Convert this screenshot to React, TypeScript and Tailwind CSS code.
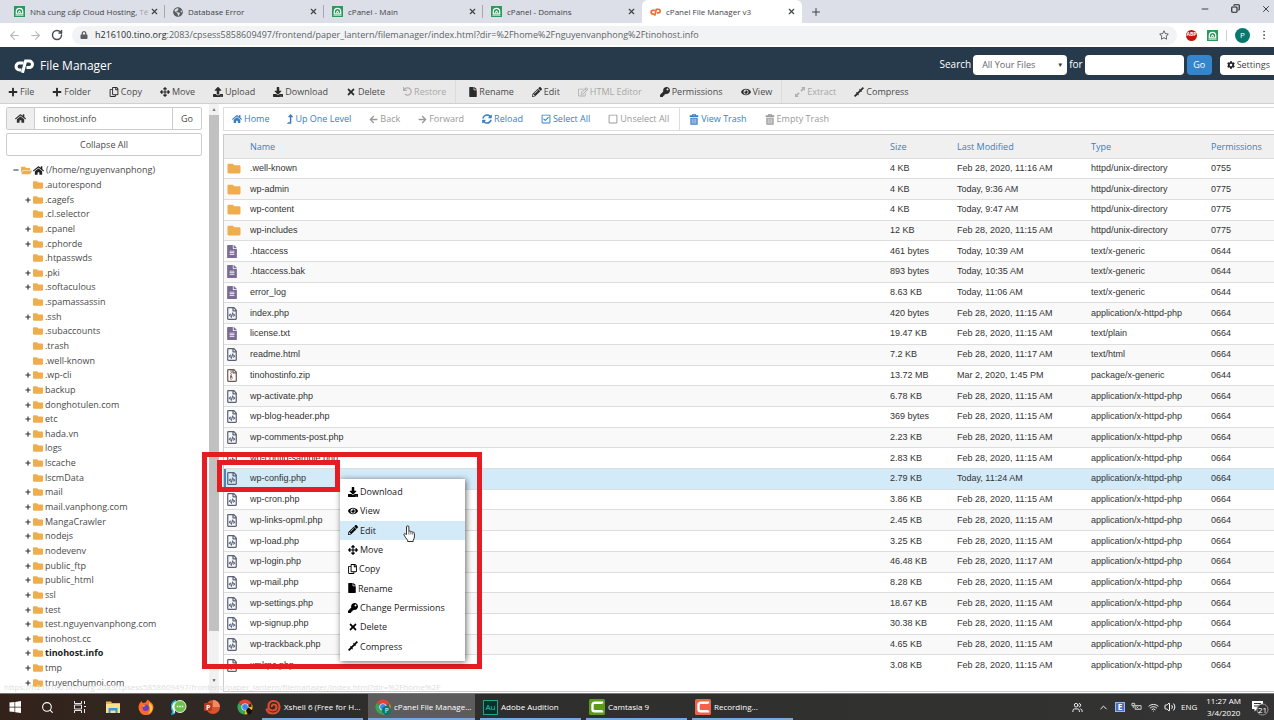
import type { ReactNode } from "react";
import {
  FaArrowLeft,
  FaArrowRight,
  FaArrowsAlt,
  FaCog,
  FaDownload,
  FaEye,
  FaFile,
  FaFileAlt,
  FaFolder,
  FaFolderOpen,
  FaGlobeAmericas,
  FaHome,
  FaKey,
  FaLevelUpAlt,
  FaLock,
  FaMinus,
  FaPencilAlt,
  FaPlus,
  FaRegCheckSquare,
  FaRegCopy,
  FaRegEdit,
  FaRegFileArchive,
  FaRegFileCode,
  FaRegSquare,
  FaRegStar,
  FaSyncAlt,
  FaTimes,
  FaUndo,
  FaUpload,
} from "react-icons/fa";
import { ArrowLeft, ArrowRight, ChevronUp, Copy, Minus, MoreVertical, Plus, RotateCw, Search, Users, Volume2, Wifi, X } from "lucide-react";

type Kind = "folder" | "text" | "code" | "zip";

type FileRow = {
  name: string;
  kind: Kind;
  size: string;
  modified: string;
  type: string;
  perms: string;
};

const DIR = "httpd/unix-directory";
const PHP = "application/x-httpd-php";

const files: FileRow[] = [
  { name: ".well-known", kind: "folder", size: "4 KB", modified: "Feb 28, 2020, 11:16 AM", type: DIR, perms: "0755" },
  { name: "wp-admin", kind: "folder", size: "4 KB", modified: "Today, 9:36 AM", type: DIR, perms: "0775" },
  { name: "wp-content", kind: "folder", size: "4 KB", modified: "Today, 9:47 AM", type: DIR, perms: "0775" },
  { name: "wp-includes", kind: "folder", size: "12 KB", modified: "Feb 28, 2020, 11:15 AM", type: DIR, perms: "0775" },
  { name: ".htaccess", kind: "text", size: "461 bytes", modified: "Today, 10:39 AM", type: "text/x-generic", perms: "0644" },
  { name: ".htaccess.bak", kind: "text", size: "893 bytes", modified: "Today, 10:35 AM", type: "text/x-generic", perms: "0644" },
  { name: "error_log", kind: "text", size: "8.63 KB", modified: "Today, 11:06 AM", type: "text/x-generic", perms: "0644" },
  { name: "index.php", kind: "code", size: "420 bytes", modified: "Feb 28, 2020, 11:15 AM", type: PHP, perms: "0664" },
  { name: "license.txt", kind: "text", size: "19.47 KB", modified: "Feb 28, 2020, 11:15 AM", type: "text/plain", perms: "0664" },
  { name: "readme.html", kind: "code", size: "7.2 KB", modified: "Feb 28, 2020, 11:17 AM", type: "text/html", perms: "0664" },
  { name: "tinohostinfo.zip", kind: "zip", size: "13.72 MB", modified: "Mar 2, 2020, 1:45 PM", type: "package/x-generic", perms: "0644" },
  { name: "wp-activate.php", kind: "code", size: "6.78 KB", modified: "Feb 28, 2020, 11:15 AM", type: PHP, perms: "0664" },
  { name: "wp-blog-header.php", kind: "code", size: "369 bytes", modified: "Feb 28, 2020, 11:15 AM", type: PHP, perms: "0664" },
  { name: "wp-comments-post.php", kind: "code", size: "2.23 KB", modified: "Feb 28, 2020, 11:15 AM", type: PHP, perms: "0664" },
  { name: "wp-config-sample.php", kind: "code", size: "2.83 KB", modified: "Feb 28, 2020, 11:15 AM", type: PHP, perms: "0664" },
  { name: "wp-config.php", kind: "code", size: "2.79 KB", modified: "Today, 11:24 AM", type: PHP, perms: "0664" },
  { name: "wp-cron.php", kind: "code", size: "3.86 KB", modified: "Feb 28, 2020, 11:15 AM", type: PHP, perms: "0664" },
  { name: "wp-links-opml.php", kind: "code", size: "2.45 KB", modified: "Feb 28, 2020, 11:15 AM", type: PHP, perms: "0664" },
  { name: "wp-load.php", kind: "code", size: "3.25 KB", modified: "Feb 28, 2020, 11:15 AM", type: PHP, perms: "0664" },
  { name: "wp-login.php", kind: "code", size: "46.48 KB", modified: "Feb 28, 2020, 11:17 AM", type: PHP, perms: "0664" },
  { name: "wp-mail.php", kind: "code", size: "8.28 KB", modified: "Feb 28, 2020, 11:15 AM", type: PHP, perms: "0664" },
  { name: "wp-settings.php", kind: "code", size: "18.67 KB", modified: "Feb 28, 2020, 11:15 AM", type: PHP, perms: "0664" },
  { name: "wp-signup.php", kind: "code", size: "30.38 KB", modified: "Feb 28, 2020, 11:15 AM", type: PHP, perms: "0664" },
  { name: "wp-trackback.php", kind: "code", size: "4.65 KB", modified: "Feb 28, 2020, 11:15 AM", type: PHP, perms: "0664" },
  { name: "xmlrpc.php", kind: "code", size: "3.08 KB", modified: "Feb 28, 2020, 11:15 AM", type: PHP, perms: "0664" },
];

// [name, has children]
const tree: [string, boolean][] = [
  [".autorespond", false],
  [".cagefs", true],
  [".cl.selector", false],
  [".cpanel", true],
  [".cphorde", true],
  [".htpasswds", false],
  [".pki", true],
  [".softaculous", true],
  [".spamassassin", false],
  [".ssh", true],
  [".subaccounts", false],
  [".trash", false],
  [".well-known", false],
  [".wp-cli", true],
  ["backup", true],
  ["donghotulen.com", true],
  ["etc", true],
  ["hada.vn", true],
  ["logs", false],
  ["lscache", true],
  ["lscmData", false],
  ["mail", true],
  ["mail.vanphong.com", true],
  ["MangaCrawler", true],
  ["nodejs", true],
  ["nodevenv", true],
  ["public_ftp", true],
  ["public_html", true],
  ["ssl", true],
  ["test", true],
  ["test.nguyenvanphong.com", true],
  ["tinohost.cc", true],
  ["tinohost.info", true],
  ["tmp", true],
  ["truyenchumoi.com", true],
];

function CpanelLogo({ className }: { className: string }) {
  return (
    <svg viewBox="0 0 20 14" className={className} fill="none" stroke="currentColor" strokeWidth="3">
      <path d="M9.600 4H5.500a3.400 3.400 0 0 0 0 6.900H7.500" />
      <path d="M8.500 13.800 11.600 2h3.600a3.200 3.200 0 0 1 0 6.600h-2.700" />
    </svg>
  );
}

function CompressIcon() {
  return (
    <svg viewBox="0 0 16 16" className="size-[10px]" fill="currentColor">
      <path d="M8.500 2.500v5H13l-1-1.500L16 2 14 0l-4 3.800z" />
      <path d="M7.500 13.500v-5H3l1 1.500L0 14l2 2 4-3.800z" />
      <path d="m5.500 8.500 3-3 2 2-3 3z" />
    </svg>
  );
}

function ExtractIcon() {
  return (
    <svg viewBox="0 0 16 16" className="size-[10px]" fill="currentColor">
      <path d="M16 0v6l-2-2-3.500 3.500-2-2L12 2l-2-2zM0 16v-6l2 2 3.500-3.500 2 2L4 14l2 2z" />
    </svg>
  );
}

function TrashIcon() {
  return (
    <svg viewBox="0 0 16 18" className="h-[11px] w-[10px]" fill="currentColor">
      <path
        d="M5 0h6v2h4v3H1V2h4zM6.500 1.200V2h3v-.8zM2 6h12v11.500H2zM4.300 7.500V16h1.200V7.500zm3.100 0V16h1.200V7.500zm3.100 0V16h1.200V7.500z"
        fillRule="evenodd"
      />
    </svg>
  );
}

function TinoIcon() {
  return (
    <svg viewBox="0 0 12 12" className="size-[11px] shrink-0">
      <rect width="12" height="12" fill="#2a9a5b" />
      <path d="M2.500 8.500V6a3.500 3.500 0 0 1 7 0v2.500z" fill="none" stroke="#fff" strokeWidth="1.300" />
      <path d="M4.500 7.200 6 5.600l1.500 1.600" fill="none" stroke="#fff" strokeWidth="1.200" />
      <path d="M1.500 10.200h9" stroke="#bfe6cf" strokeWidth="1" />
    </svg>
  );
}

function KindIcon({ kind }: { kind: Kind }) {
  if (kind === "folder") return <FaFolder className="h-[13px] w-[14px] text-[#f0ad4e]" />;
  if (kind === "text") return <FaFileAlt className="h-[13px] w-[10px] text-[#7b6a95]" />;
  if (kind === "zip") return <FaRegFileArchive className="h-[13px] w-[10px] text-[#6e5a50]" />;
  return <FaRegFileCode className="h-[13px] w-[10px] text-[#5a6078]" />;
}

function Tab({ icon, title, active, last }: { icon: ReactNode; title: ReactNode; active?: boolean; last?: boolean }) {
  return (
    <div
      className={
        active
          ? "flex w-[160px] items-center rounded-t-md bg-white pr-[6px] pl-[8px]"
          : "flex w-[159px] items-center pr-[6px] pl-[8px]"
      }
    >
      {icon}
      <span className="ml-[5px] flex-1 text-[8px] whitespace-nowrap text-[#3f4348]">{title}</span>
      <button type="button" aria-label="Close tab" className="text-[#3c4043]">
        <X size={9} strokeWidth={3} />
      </button>
      {!active && !last && <span className="-mr-[6px] ml-[5px] h-[13px] w-px bg-[#a5a9b0]" />}
    </div>
  );
}

function BrowserChrome() {
  return (
    <header className="shrink-0">
      <div className="flex h-[23px] items-stretch bg-[#dcdfe7] pl-[6px]">
        <Tab
          icon={<TinoIcon />}
          title={
            <>
              Nhà cung cấp Cloud Hosting, <span className="text-[#a0a4ab]">Tê</span>
            </>
          }
        />
        <Tab icon={<FaGlobeAmericas className="size-[10px] shrink-0 text-[#5a5e63]" />} title="Database Error" />
        <Tab icon={<TinoIcon />} title="cPanel - Main" />
        <Tab icon={<TinoIcon />} title="cPanel - Domains" last />
        <Tab icon={<CpanelLogo className="h-[8px] w-[11px] shrink-0 text-[#ef6c35]" />} title="cPanel File Manager v3" active />
        <button type="button" aria-label="New tab" className="ml-[8px] text-[#3c4043]">
          <Plus size={12} strokeWidth={2} />
        </button>
        <div className="ml-auto flex items-start gap-[21px] pt-[4px] pr-[3px] text-[#222]">
          <Minus size={10} strokeWidth={2} />
          <Copy size={9} strokeWidth={3} className="-scale-x-100" />
          <X size={10} strokeWidth={2} />
        </div>
      </div>
      <div className="flex h-[24px] items-center bg-white pr-[4px] pl-[8px]">
        <ArrowLeft size={13} className="text-[#b5b8bb]" />
        <ArrowRight size={13} className="ml-[8px] text-[#b5b8bb]" />
        <RotateCw size={12} strokeWidth={3} className="ml-[9px] text-[#4a4d51]" />
        <div className="ml-[9px] flex h-[19px] flex-1 items-center rounded-full bg-[#f1f3f4] px-[8px]">
          <FaLock className="size-[8px] text-[#5a5e63]" />
          <span className="ml-[7px] flex-1 text-[9px] text-[#5f6368]">
            <span className="text-[#2a2c2f]">h216100.tino.org</span>
            :2083/cpsess5858609497/frontend/paper_lantern/filemanager/index.html?dir=%2Fhome%2Fnguyenvanphong%2Ftinohost.info
          </span>
          <FaRegStar className="size-[10px] text-[#5a5e63]" />
        </div>
        <span className="ml-[9px] flex size-[11px] items-center justify-center rounded-full bg-[#c2170c] text-[5px] font-bold text-white">
          ABP
        </span>
        <span className="ml-[10px]">
          <TinoIcon />
        </span>
        <span className="mx-[8px] h-[11px] w-px bg-[#d0d3d6]" />
        <span className="flex size-[15px] items-center justify-center rounded-full bg-[#07786f] text-[8px] text-white">P</span>
        <MoreVertical size={12} className="ml-[8px] text-[#5a5e63]" />
      </div>
    </header>
  );
}

function ManagerHeader() {
  return (
    <div className="flex h-[33px] shrink-0 items-center bg-[#273a4c] pl-[14px] text-white">
      <div className="flex items-center gap-[6px] pt-[5px]">
        <CpanelLogo className="h-[14px] w-[20px]" />
        <h1 className="text-[12px]">File Manager</h1>
      </div>
      <form className="ml-auto flex items-center pt-[2px] text-[10px]" onSubmit={(e) => e.preventDefault()}>
        <label htmlFor="scope">Search</label>
        <span className="relative ml-[2px]">
          <select id="scope" className="h-[20px] w-[94px] appearance-none rounded-sm bg-white px-[9px] text-[9px] text-[#666]">
            <option>All Your Files</option>
          </select>
          <span className="pointer-events-none absolute top-[6px] right-[4px] text-[6px] leading-[8px] text-[#333]">▼</span>
        </span>
        <label htmlFor="query" className="ml-[2px]">
          for
        </label>
        <input id="query" className="ml-[2px] h-[20px] w-[99px] rounded-sm bg-white px-[6px] text-[#333]" />
        <button type="submit" className="ml-[3px] h-[20px] w-[25px] rounded-sm bg-[#3585cc] text-[9px]">
          Go
        </button>
        <button type="button" className="ml-[8px] flex h-[20px] items-center gap-[2px] rounded-l-sm bg-white pr-[4px] pl-[7px] text-[9px] text-[#444]">
          <FaCog className="size-[8px] text-[#222]" />
          Settings
        </button>
      </form>
    </div>
  );
}

function Tool({ icon, label, disabled, end }: { icon: ReactNode; label: string; disabled?: boolean; end?: boolean }) {
  return (
    <button
      type="button"
      disabled={disabled}
      className={`flex items-center gap-[2px] border-r pr-[9px] pl-[8px] text-[9px] ${
        end ? "mr-[5px] border-[#dcdcdc]" : "border-transparent"
      } ${disabled ? "text-[#a8a8a8]" : "text-[#4a4a4a]"}`}
    >
      <span className={disabled ? "text-[#b0b0b0]" : "text-[#2b2b2b]"}>{icon}</span>
      {label}
    </button>
  );
}

function Toolbar() {
  const s = "size-[10px]";
  return (
    <div className="flex h-[24px] shrink-0 items-stretch border-b border-[#d0d0d0] bg-[#e9e9e9]">
      <Tool icon={<FaPlus className={s} />} label="File" />
      <Tool icon={<FaPlus className={s} />} label="Folder" />
      <Tool icon={<FaRegCopy className={s} />} label="Copy" />
      <Tool icon={<FaArrowsAlt className={s} />} label="Move" />
      <Tool icon={<FaUpload className={s} />} label="Upload" />
      <Tool icon={<FaDownload className={s} />} label="Download" />
      <Tool icon={<FaTimes className={s} />} label="Delete" />
      <Tool icon={<FaUndo className="size-[9px]" />} label="Restore" disabled end />
      <Tool icon={<FaFile className="h-[10px] w-[8px]" />} label="Rename" />
      <Tool icon={<FaPencilAlt className={s} />} label="Edit" />
      <Tool icon={<FaRegEdit className={s} />} label="HTML Editor" disabled />
      <Tool icon={<FaKey className={s} />} label="Permissions" />
      <Tool icon={<FaEye className={s} />} label="View" end />
      <Tool icon={<ExtractIcon />} label="Extract" disabled />
      <Tool icon={<CompressIcon />} label="Compress" />
    </div>
  );
}

function Sidebar() {
  return (
    <aside className="flex w-[209px] shrink-0 flex-col pt-[3px] pr-[7px] pb-[3px] pl-[6px] text-[9px] text-[#4a4a4a]">
      <form className="flex h-[23px] shrink-0 rounded-xs border border-[#ccc]" onSubmit={(e) => e.preventDefault()}>
        <button type="button" aria-label="Home" className="flex w-[28px] items-center justify-center border-r border-[#ccc] bg-[#eee]">
          <FaHome className="size-[11px] text-[#333]" />
        </button>
        <input aria-label="Path" defaultValue="tinohost.info" className="min-w-0 flex-1 px-[8px]" />
        <button type="submit" className="w-[29px] border-l border-[#ccc]">
          Go
        </button>
      </form>
      <button type="button" className="mt-[3px] h-[23px] shrink-0 rounded-xs border border-[#ccc]">
        Collapse All
      </button>
      <ul className="mt-[7px] flex min-h-0 flex-1 flex-col leading-[14px]">
        <li className="flex min-h-0 flex-1 items-center pl-[7px]">
          <FaMinus className="size-[6px] text-[#333]" />
          <FaFolderOpen className="ml-[2px] size-[11px] text-[#f0ad4e]" />
          <FaHome className="ml-[1px] size-[11px] text-[#222]" />
          <span className="ml-[2px]">(/home/nguyenvanphong)</span>
        </li>
        {tree.map(([name, children]) => (
          <li key={name} className="flex min-h-0 flex-1 items-center pl-[19px]">
            <span className="w-[8px]">{children && <FaPlus className="size-[6px] text-[#333]" />}</span>
            <FaFolder className="size-[10px] text-[#f0ad4e]" />
            <span className={name === "tinohost.info" ? "ml-[2px] font-bold text-[#222]" : "ml-[2px]"}>{name}</span>
          </li>
        ))}
      </ul>
    </aside>
  );
}

function ScrollTrack() {
  return (
    <div className="flex w-[10px] shrink-0 flex-col items-center bg-[#f1f1f1]">
      <span className="h-[11px] text-[5px] leading-[11px] text-[#777]">▲</span>
      <span className="w-full flex-1 bg-[#c1c1c1]" />
      <span className="mt-[44px] h-[18px] text-[5px] leading-[11px] text-[#555]">▼</span>
    </div>
  );
}

function NavLink({ icon, label, muted }: { icon: ReactNode; label: string; muted?: boolean }) {
  return (
    <button type="button" className={`flex items-center gap-[2px] pr-[9px] pl-[8px] ${muted ? "text-[#999]" : "text-[#3a7ec2]"}`}>
      {icon}
      {label}
    </button>
  );
}

function FilePane() {
  const s = "size-[10px]";
  return (
    <main className="ml-[4px] flex min-w-0 flex-1 flex-col pt-[3px]">
      <nav className="flex h-[24px] shrink-0 items-stretch gap-px border border-r-0 border-[#ddd] text-[9px]">
        <NavLink icon={<FaHome className={s} />} label="Home" />
        <NavLink icon={<FaLevelUpAlt className="h-[10px] w-[6px]" />} label="Up One Level" />
        <NavLink icon={<FaArrowLeft className="size-[9px]" />} label="Back" muted />
        <NavLink icon={<FaArrowRight className="size-[9px]" />} label="Forward" muted />
        <NavLink icon={<FaSyncAlt className={s} />} label="Reload" />
        <NavLink icon={<FaRegCheckSquare className={s} />} label="Select All" />
        <NavLink icon={<FaRegSquare className={s} />} label="Unselect All" muted />
        <span className="w-px bg-[#ddd]" />
        <NavLink icon={<TrashIcon />} label="View Trash" />
        <NavLink icon={<TrashIcon />} label="Empty Trash" muted />
      </nav>
      <div className="mt-[3px] mb-px min-h-0 flex-1 border border-r-0 border-[#ccc] pb-[16px]">
        <table className="h-full w-full table-fixed border-collapse text-left text-[9px] text-[#333]">
          <colgroup>
            <col className="w-[26px]" />
            <col />
            <col className="w-[67px]" />
            <col className="w-[134px]" />
            <col className="w-[120px]" />
            <col className="w-[63px]" />
          </colgroup>
          <thead>
            <tr className="h-[23px] bg-[#f0f0f0] text-[#3a7ec2]">
              <th aria-label="Kind" />
              <th className="font-normal">Name</th>
              <th className="font-normal">Size</th>
              <th className="font-normal">Last Modified</th>
              <th className="font-normal">Type</th>
              <th className="font-normal">Permissions</th>
            </tr>
          </thead>
          <tbody className="font-['Liberation_Sans',Arial,sans-serif]">
            {files.map((f, i) => (
              <tr
                key={f.name}
                className={`border-t border-[#ddd] leading-[13px] ${
                  f.name === "wp-config.php" ? "bg-[#d3eaf8] shadow-[inset_2px_0_0_#4585c4]" : i % 2 ? "bg-[#f9f9f9]" : "bg-white"
                }`}
              >
                <td className="pl-[3px]">
                  <KindIcon kind={f.kind} />
                </td>
                <td>{f.name}</td>
                <td>{f.size}</td>
                <td>{f.modified}</td>
                <td>{f.type}</td>
                <td>{f.perms}</td>
              </tr>
            ))}
          </tbody>
        </table>
      </div>
    </main>
  );
}

function ContextMenu() {
  const s = "size-[10px]";
  const items: [ReactNode, string][] = [
    [<FaDownload className={s} />, "Download"],
    [<FaEye className={s} />, "View"],
    [<FaPencilAlt className={s} />, "Edit"],
    [<FaArrowsAlt className={s} />, "Move"],
    [<FaRegCopy className="h-[10px] w-[9px]" />, "Copy"],
    [<FaFile className="h-[10px] w-[8px]" />, "Rename"],
    [<FaKey className={s} />, "Change Permissions"],
    [<FaTimes className={s} />, "Delete"],
    [<CompressIcon />, "Compress"],
  ];
  return (
    <div className="absolute top-[479px] left-[340px] flex h-[182px] w-[125px] flex-col bg-white pt-[3px] pb-[5px] text-[9px] text-[#222] shadow-[1px_1px_6px_rgba(0,0,0,0.6)]">
      {items.map(([icon, label]) => (
        <button
          key={label}
          type="button"
          className={`flex min-h-0 flex-1 items-center gap-[2px] pl-[8px] ${label === "Edit" ? "bg-[#d3eaf8]" : ""}`}
        >
          <span className="text-black">{icon}</span>
          {label}
        </button>
      ))}
    </div>
  );
}

function HandCursor() {
  return (
    <svg viewBox="0 0 12 17" className="absolute top-[525px] left-[403px] h-[17px] w-[12px]">
      <path
        d="M3.500 9.500V2a1.200 1.200 0 0 1 2.400 0v4.500c.6-.8 1.700-.6 2 .3.600-.6 1.600-.3 1.800.5.800-.4 1.700.1 1.700 1V12c0 1.500-.8 2.300-1.200 3.200v1.300H4.600v-1.300C3.500 13.800 2 12 .9 9.800.5 8.800 1.700 8.200 2.400 9z"
        fill="#fff"
        stroke="#333"
        strokeWidth="1"
      />
      <path d="M5.900 6.500v3M7.900 7v2.500M9.700 7.500v2" stroke="#333" strokeWidth=".7" />
    </svg>
  );
}

function ChromeLogo({ badge }: { badge: ReactNode }) {
  return (
    <svg viewBox="0 0 16 16" className="size-[16px] shrink-0">
      <path d="M8 8 1.500 4.200A7.500 7.500 0 0 1 14.500 4.200z" fill="#e24335" />
      <path d="M8 8 1.500 4.200A7.500 7.500 0 0 0 8 15.500z" fill="#34a853" />
      <path d="M8 8h6.500V4.200A7.500 7.500 0 0 1 8 15.500z" fill="#fbbc05" />
      <circle cx="8" cy="8" r="3.600" fill="#fff" />
      <circle cx="8" cy="8" r="2.900" fill="#4285f4" />
      {badge}
    </svg>
  );
}

function CamtasiaLogo({ color }: { color: string }) {
  return (
    <svg viewBox="0 0 16 16" className="size-[16px] shrink-0">
      <rect width="16" height="16" rx="1.500" fill={color} />
      <path d="M13 4.500V3.800H5.500a2 2 0 0 0-2 2v4.500a2 2 0 0 0 2 2H13v-.8" fill="none" stroke="#fff" strokeWidth="2.400" />
    </svg>
  );
}

function TaskButton({ icon, label, active }: { icon: ReactNode; label: string; active?: boolean }) {
  return (
    <button
      type="button"
      className={`flex items-center gap-[3px] border-b-2 border-[#76a9dc] pt-[2px] text-[8px] whitespace-nowrap text-white ${
        active ? "w-[107px] bg-[#5c5c5c] pl-[7px]" : "w-[101px] pl-[3px]"
      }`}
    >
      {icon}
      {label}
    </button>
  );
}

function Taskbar() {
  return (
    <footer className="flex h-[27px] shrink-0 items-stretch border-t border-[#777] bg-linear-to-r from-[#33221a] via-[#2d2d2b] via-25% to-[#333] pr-[5px] text-white">
      <div className="flex items-center gap-[17px] pl-[7px]">
        <svg viewBox="0 0 16 16" className="size-[16px]" fill="#fff">
          <path d="M2.500 3.600 7.500 3v4.700h-5zM8.200 2.900l5.800-.8v5.600H8.200zM2.500 8.400h5v4.700l-5-.7zM8.200 8.400H14V14l-5.800-.8z" />
        </svg>
        <Search size={13} strokeWidth={2} className="mx-px" />
        <svg viewBox="0 0 16 16" className="size-[16px]" fill="none" stroke="#e8e8e8">
          <path d="M2.500 2v2.500h7V2M2.500 14v-2.500h7V14M2.500 6h7v4h-7zM12.500 2v3m0 5v4M12 7.500h2" />
        </svg>
        <svg viewBox="0 0 16 16" className="size-[16px]">
          <path d="M1 2.500h5l1 1.500h8v10H1z" fill="#e8b84e" />
          <path d="M1 5h14v9H1z" fill="#fde08d" />
          <path d="M3.500 9h9v5h-2v-2.500h-5V14h-2z" fill="#3a9bd6" />
        </svg>
        <svg viewBox="0 0 16 16" className="size-[16px]">
          <path d="M13.500 3.800C12 2.500 11 2 10 .5 8.500 1.500 8 3 8 3.600c-1.500 0-2 .2-2.700.6C4.300 3.800 3.600 2.800 3.600 2 1.500 4 .5 6 .5 8.600a7.300 7.300 0 0 0 15 0c0-2-.8-3.700-2-4.800z" fill="#fb6a2c" />
          <path d="M11 3c2 2 3.500 3.500 3.500 6A6.500 6.500 0 0 1 10 15c3-3 2-7 1-8z" fill="#ffcb3a" />
          <circle cx="7.800" cy="8.800" r="3.200" fill="#6b3fc4" />
          <path d="M4 6.500c1.500-1 3-.5 4 .5-1.500 0-2 .8-3 .8z" fill="#ff9a2e" />
        </svg>
        <svg viewBox="0 0 16 16" className="size-[16px]">
          <path d="M5 1.500A6.500 6.500 0 0 0 2 12l-1 3 3-.8" fill="#fff" stroke="#27a7c9" strokeWidth="1.500" />
          <circle cx="9" cy="7.500" r="6" fill="#6cc04a" stroke="#e9f7e2" />
          <path d="M5.800 7.500h6.500" stroke="#fff" strokeDasharray="1.500 1" strokeWidth="1.500" />
        </svg>
        <svg viewBox="0 0 16 16" className="size-[16px]">
          <circle cx="9" cy="8" r="7" fill="#d8532f" />
          <path d="M9 1a7 7 0 0 1 7 7H9z" fill="#f08a68" />
          <rect x="0" y="4" width="8" height="8" rx="1" fill="#b7391b" />
          <text x="2" y="10.500" fontSize="7" fontWeight="bold" fill="#fff">P</text>
        </svg>
        <ChromeLogo badge={<path d="M9 11.500c1-1 1.500-3 2.500-3s1.500 2 4 3c-1 2-1.500 4-3.500 4s-2-2-3-4z" fill="#111" />} />
      </div>
      <div className="ml-[9px] flex gap-[5px]">
        <TaskButton
          icon={
            <svg viewBox="0 0 16 16" className="size-[16px] shrink-0">
              <path d="M1.500 9.500C2 13 5 14.500 8 14.500c4 0 6.500-3 6.500-6.500S12 2 8.500 2 3.500 4.500 3.500 7.500 6 11.500 8 11.500s3.500-1.500 3.500-3.500S10 5.500 8.500 5.500 6.500 7 7 8" fill="none" stroke="#dd4b30" strokeWidth="2.200" />
            </svg>
          }
          label="Xshell 6 (Free for H..."
        />
        <TaskButton
          active
          icon={
            <ChromeLogo
              badge={
                <>
                  <circle cx="11.500" cy="11.500" r="4.500" fill="#07786f" />
                  <text x="9.700" y="14" fontSize="6.500" fill="#fff">P</text>
                </>
              }
            />
          }
          label="cPanel File Manage..."
        />
        <TaskButton
          icon={
            <span className="flex size-[15px] shrink-0 items-center justify-center border border-[#1fa58b] bg-[#06302c] text-[8px] text-[#2fd0b0]">
              Au
            </span>
          }
          label="Adobe Audition"
        />
        <TaskButton icon={<CamtasiaLogo color="#5c9a1c" />} label="Camtasia 9" />
        <TaskButton icon={<CamtasiaLogo color="#f0624c" />} label="Recording..." />
      </div>
      <div className="ml-auto flex items-center text-[8px] leading-[12px]">
        <Users size={11} strokeWidth={2} className="mr-[15px]" />
        <ChevronUp size={11} strokeWidth={2} className="mr-[6px]" />
        <span className="mr-[6px] flex size-[10px] items-center justify-center border border-[#9cb4e8] bg-[#4a6fc4] font-bold">E</span>
        <svg viewBox="0 0 12 10" className="mr-[6px] h-[10px] w-[11px]" fill="none" stroke="#ddd">
          <path d="M1 1h3v2.500H1zM2.500 3.500V6M4.500 3.500H11v4H4.500zM6 4.500l2 2m0-2-2 2" />
        </svg>
        <Wifi size={11} strokeWidth={2} className="mr-[5px]" />
        <Volume2 size={12} strokeWidth={2} className="mr-[5px]" />
        <span>ENG</span>
        <span className="mr-[6px] ml-[9px] text-center">
          11:27 AM
          <br />
          3/4/2020
        </span>
        <span className="relative ml-[4px] flex size-[18px]">
          <svg viewBox="0 0 18 18" className="size-[18px]">
            <path d="M1 3h11v8H6l-2.500 2.500V11H1z" fill="#fff" />
            <path d="M3 5.500h7M3 8h7" stroke="#333" />
            <circle cx="11.500" cy="11.500" r="5.500" fill="#333" stroke="#999" />
          </svg>
          <span className="absolute top-[6px] left-[7px]">21</span>
        </span>
      </div>
    </footer>
  );
}

export default function App() {
  return (
    <div className="relative flex h-screen flex-col overflow-hidden bg-white font-['Open_Sans','Noto_Sans',sans-serif]">
      <BrowserChrome />
      <ManagerHeader />
      <Toolbar />
      <div className="flex min-h-0 flex-1">
        <Sidebar />
        <ScrollTrack />
        <FilePane />
      </div>
      <Taskbar />

      <span className="absolute bottom-[26px] left-[4px] text-[8px] leading-[14px] text-[#dedede]">
        https://h216100.tino.org:2083/cpsess5858609497/frontend/paper_lantern/filemanager/index.html?dir=%2Fhome%2F
      </span>
      <div className="absolute top-[452px] left-[202px] h-[217px] w-[280px] border-5 border-[#e61c23]" />
      <ContextMenu />
      <div className="absolute top-[460px] left-[217px] h-[32px] w-[123px] border-5 border-[#e61c23]" />
      <HandCursor />
    </div>
  );
}
